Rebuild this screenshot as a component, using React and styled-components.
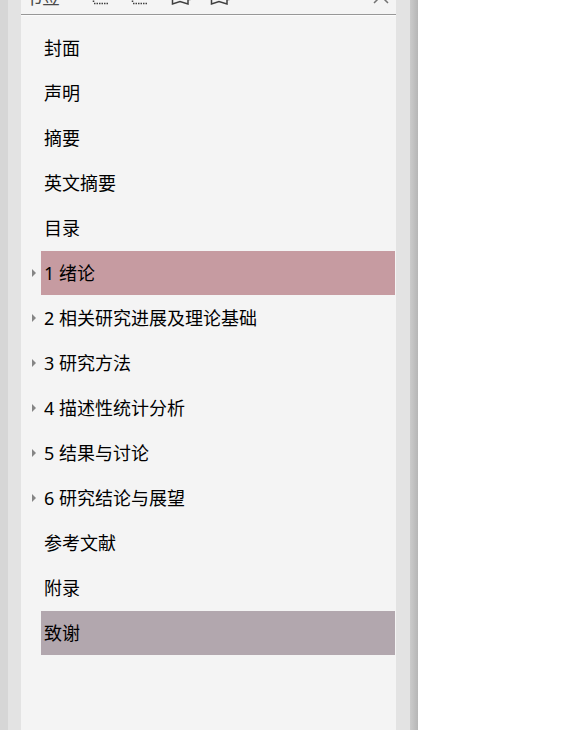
import React, { useState } from 'react';
import styled, { createGlobalStyle } from 'styled-components';

const GlobalStyle = createGlobalStyle`
  * {
    box-sizing: border-box;
  }

  body {
    margin: 0;
    background: #ffffff;
    font-family: "Noto Sans", "Noto Sans CJK SC", sans-serif;
  }
`;

// --- STYLED COMPONENTS ---

const Layout = styled.div`
  display: grid;
  grid-template-columns: 8px 13px minmax(0, 375px) 14px 8px minmax(143px, 1fr);
  min-height: 100vh;
`;

const Edge = styled.div`
  background: #d6d6d6;
`;

const Gutter = styled.div`
  background: #e3e3e3;
`;

const Shadow = styled.div`
  background: linear-gradient(to right, #cbcbcb, #b6b6b6);
`;

const Document = styled.main`
  background: #ffffff;
`;

const Panel = styled.aside`
  background: #f4f4f4;
`;

const Header = styled.header`
  display: flex;
  align-items: flex-end;
  height: 15px;
  padding: 0 5px 0 3px;
  border-bottom: 1px solid #979797;
  box-shadow: 0 1px 0 #fcfcfc;
  overflow: hidden;
`;

const Title = styled.h1`
  margin: 0 31px 7px 0;
  font-size: 18px;
  font-weight: 400;
  line-height: 20px;
  color: #4a4a4a;
`;

const Tools = styled.div`
  display: flex;
  flex: 1;
  gap: 19px;
`;

const ToolButton = styled.button`
  display: block;
  flex: none;
  width: 20px;
  height: 20px;
  margin: 0 0 8px;
  padding: 0;
  border: 0;
  background: none;
  color: #404040;

  svg {
    display: block;
    overflow: visible;
  }
`;

const List = styled.ul`
  display: flex;
  flex-direction: column;
  gap: 1px;
  margin: 0;
  padding: 11px 1px 11px 10px;
  list-style: none;
`;

const Item = styled.li`
  display: grid;
  grid-template-columns: 10px 1fr;
  align-items: center;
`;

const Toggle = styled.button`
  display: flex;
  align-items: center;
  width: 10px;
  height: 44px;
  padding: 0 0 0 1px;
  border: 0;
  background: none;
  color: #858585;
`;

const Bookmark = styled.a`
  grid-column: 2;
  height: 44px;
  padding: 0 3px;
  overflow: hidden;
  font-size: 18px;
  line-height: 44px;
  color: #000000;
  white-space: nowrap;
  text-decoration: none;
  background: ${({ $tint }) => $tint || 'transparent'};
`;

// --- ICONS ---

const ListIcon = () => (
  <svg width="20" height="20" viewBox="0 0 20 20" fill="none" stroke="currentColor">
    <path d="M2.5 2v15" strokeWidth="1.5" strokeDasharray="1.5 1" />
    <path d="M3 17.5h14M6 11.5h11M6 5.5h11" strokeWidth="1.5" strokeDasharray="1.5 1" />
  </svg>
);

const RibbonIcon = () => (
  <svg width="20" height="20" viewBox="0 0 20 20" fill="none" stroke="currentColor" strokeWidth="1.5">
    <path d="M3.5 1v17l7.5-2.5 8 2.5V1z" />
    <path d="M19 13.5h2.5" />
  </svg>
);

const CloseIcon = () => (
  <svg width="20" height="20" viewBox="0 0 20 20" fill="none" stroke="#737373" strokeWidth="1.5">
    <path d="M3 3l14 14M17 3L3 17" />
  </svg>
);

const ArrowIcon = () => (
  <svg width="5" height="8" viewBox="0 0 5 8" fill="currentColor">
    <path d="M0 0l4 4-4 4z" />
  </svg>
);

// --- DATA ---

const tools = [
  { label: '展开书签', Icon: ListIcon },
  { label: '折叠书签', Icon: ListIcon },
  { label: '添加书签', Icon: RibbonIcon },
  { label: '删除书签', Icon: RibbonIcon },
];

const bookmarks = [
  { title: '封面' },
  { title: '声明' },
  { title: '摘要' },
  { title: '英文摘要' },
  { title: '目录' },
  { title: '1 绪论', nested: true, tint: '#c69ba1' },
  { title: '2 相关研究进展及理论基础', nested: true },
  { title: '3 研究方法', nested: true },
  { title: '4 描述性统计分析', nested: true },
  { title: '5 结果与讨论', nested: true },
  { title: '6 研究结论与展望', nested: true },
  { title: '参考文献' },
  { title: '附录' },
  { title: '致谢', tint: '#b2a7ae' },
];

// --- COMPONENTS ---

const BookmarkItem = ({ bookmark }) => {
  const [open, setOpen] = useState(false);

  return (
    <Item>
      {bookmark.nested && (
        <Toggle
          type="button"
          aria-label={bookmark.title}
          aria-expanded={open}
          onClick={() => setOpen(!open)}
        >
          <ArrowIcon />
        </Toggle>
      )}
      <Bookmark href="#" $tint={bookmark.tint}>{bookmark.title}</Bookmark>
    </Item>
  );
};

const App = () => {
  return (
    <>
      <GlobalStyle />
      <Layout>
        <Edge />
        <Gutter />
        <Panel>
          <Header>
            <Title>书签</Title>
            <Tools>
              {tools.map(({ label, Icon }) => (
                <ToolButton key={label} type="button" aria-label={label}>
                  <Icon />
                </ToolButton>
              ))}
            </Tools>
            <ToolButton type="button" aria-label="关闭">
              <CloseIcon />
            </ToolButton>
          </Header>
          <nav aria-label="书签">
            <List>
              {bookmarks.map((bookmark) => (
                <BookmarkItem key={bookmark.title} bookmark={bookmark} />
              ))}
            </List>
          </nav>
        </Panel>
        <Gutter />
        <Shadow />
        <Document />
      </Layout>
    </>
  );
};

export default App;
